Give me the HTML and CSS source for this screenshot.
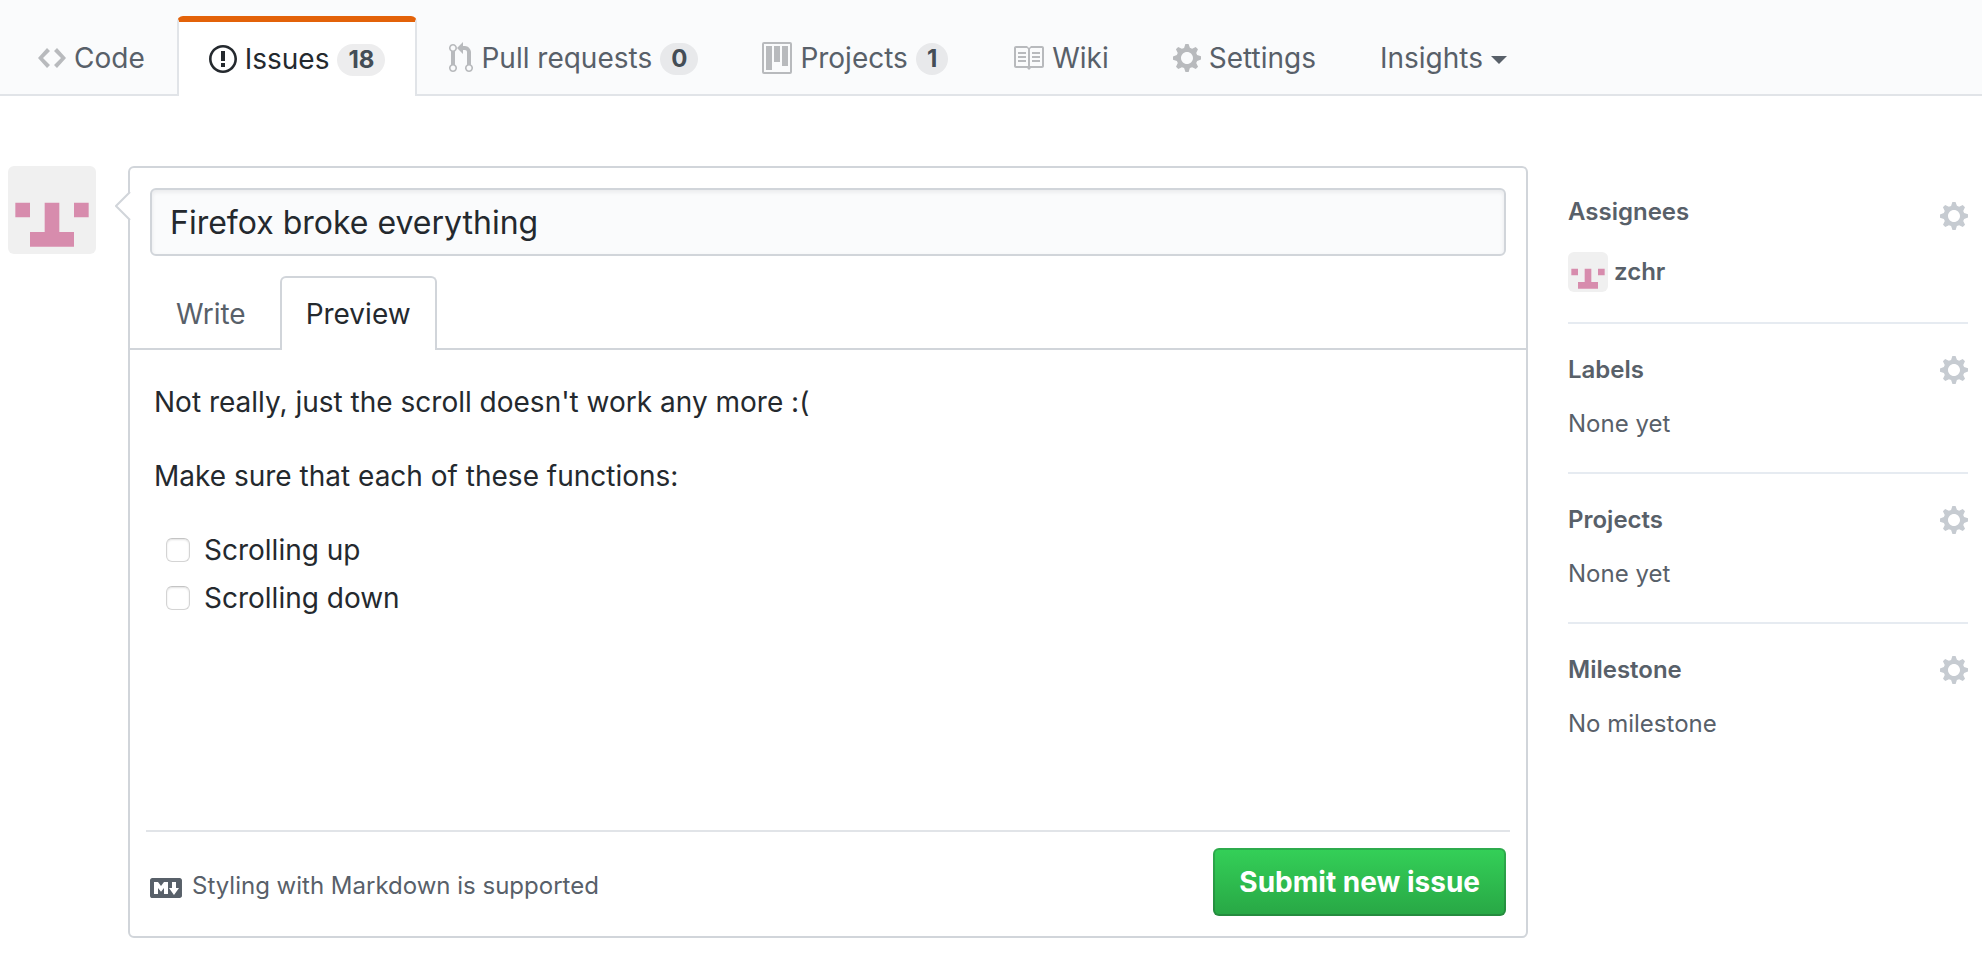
FILE: index.html
```html
<!DOCTYPE html>
<html lang="en">
<head>
<meta charset="utf-8">
<meta name="viewport" content="width=device-width, initial-scale=1">
<title>New issue</title>
<link rel="stylesheet" href="styles.css">
</head>
<body>
<svg class="defs" aria-hidden="true">
  <symbol id="gear" viewBox="0 0 14 16"><path fill-rule="evenodd" d="M14 8.77v-1.6l-1.94-.64-.45-1.09.88-1.84-1.13-1.13-1.81.91-1.09-.45-.69-1.92h-1.6l-.63 1.94-1.11.45-1.84-.88-1.13 1.13.91 1.81-.45 1.09L0 7.23v1.59l1.94.64.45 1.09-.88 1.84 1.13 1.13 1.81-.91 1.09.45.69 1.92h1.59l.63-1.94 1.11-.45 1.84.88 1.13-1.13-.92-1.81.47-1.09L14 8.75v.02zM7 11c-1.66 0-3-1.34-3-3s1.34-3 3-3 3 1.34 3 3-1.34 3-3 3z"/></symbol>
  <symbol id="identicon" viewBox="0 0 12 12"><path fill="#f0f0f0" d="M0 0h12v12H0z"/><path fill="#d78cad" d="M1 5h2v2H1zM9 5h2v2H9zM5 5h2v4h2v2H3V9h2z"/></symbol>
</svg>

<nav class="repo-nav" aria-label="Repository">
  <a class="tab" href="#code">
    <svg class="icon" width="28" height="32" viewBox="0 0 14 16" aria-hidden="true"><path fill-rule="evenodd" d="M9.5 3L8 4.5 11.5 8 8 11.5 9.5 13 14 8 9.5 3zm-5 0L0 8l4.5 5L6 11.5 2.5 8 6 4.5 4.5 3z"/></svg>
    <span>Code</span>
  </a>
  <a class="tab tab-selected" href="#issues" aria-current="page">
    <svg class="icon" width="28" height="32" viewBox="0 0 14 16" aria-hidden="true"><path fill-rule="evenodd" d="M7 2.3c3.14 0 5.7 2.56 5.7 5.7s-2.56 5.7-5.7 5.7A5.71 5.71 0 0 1 1.3 8c0-3.14 2.56-5.7 5.7-5.7zM7 1C3.14 1 0 4.14 0 8s3.14 7 7 7 7-3.14 7-7-3.14-7-7-7zm1 3H6v5h2V4zm0 6H6v2h2v-2z"/></svg>
    <span>Issues</span>
    <span class="counter">18</span>
  </a>
  <a class="tab" href="#pulls">
    <svg class="icon" width="24" height="32" viewBox="0 0 12 16" aria-hidden="true"><path fill-rule="evenodd" d="M11 11.28V5c-.03-.78-.34-1.47-.94-2.06C9.46 2.35 8.78 2.03 8 2H7V0L4 3l3 3V4h1c.27.02.48.11.69.31.21.2.3.42.31.69v6.28A1.993 1.993 0 0 0 10 15a1.993 1.993 0 0 0 1-3.72zm-1 2.92c-.66 0-1.2-.55-1.2-1.2 0-.65.55-1.2 1.2-1.2.65 0 1.2.55 1.2 1.2 0 .65-.55 1.2-1.2 1.2zM4 3c0-1.11-.89-2-2-2a1.993 1.993 0 0 0-1 3.72v6.56A1.993 1.993 0 0 0 2 15a1.993 1.993 0 0 0 1-3.72V4.72c.59-.34 1-.98 1-1.72zm-.8 10c0 .66-.55 1.2-1.2 1.2-.65 0-1.2-.55-1.2-1.2 0-.65.55-1.2 1.2-1.2.65 0 1.2.55 1.2 1.2zM2 4.2C1.34 4.2.8 3.65.8 3c0-.65.55-1.2 1.2-1.2.65 0 1.2.55 1.2 1.2 0 .65-.55 1.2-1.2 1.2z"/></svg>
    <span>Pull requests</span>
    <span class="counter">0</span>
  </a>
  <a class="tab" href="#projects">
    <svg class="icon" width="30" height="32" viewBox="0 0 15 16" aria-hidden="true"><path fill-rule="evenodd" d="M10 12h3V2h-3v10zm-4-2h3V2H6v8zm-4 4h3V2H2v12zm-1 1h13V1H1v14zM14 0H1a1 1 0 0 0-1 1v14a1 1 0 0 0 1 1h13a1 1 0 0 0 1-1V1a1 1 0 0 0-1-1z"/></svg>
    <span>Projects</span>
    <span class="counter">1</span>
  </a>
  <a class="tab" href="#wiki">
    <svg class="icon" width="32" height="32" viewBox="0 0 16 16" aria-hidden="true"><path fill-rule="evenodd" d="M3 5h4v1H3V5zm0 3h4V7H3v1zm0 2h4V9H3v1zm11-5h-4v1h4V5zm0 2h-4v1h4V7zm0 2h-4v1h4V9zm2-6v9c0 .55-.45 1-1 1H9.5l-1 1-1-1H2c-.55 0-1-.45-1-1V3c0-.55.45-1 1-1h5.5l1 1 1-1H15c.55 0 1 .45 1 1zm-8 .5L7.5 3H2v9h6V3.5zm7-.5H9.5l-.5.5V12h6V3z"/></svg>
    <span>Wiki</span>
  </a>
  <a class="tab" href="#settings">
    <svg class="icon" width="28" height="32" aria-hidden="true"><use href="#gear"/></svg>
    <span>Settings</span>
  </a>
  <button class="tab" type="button" aria-haspopup="true">
    <span>Insights</span>
    <span class="caret"></span>
  </button>
</nav>

<main class="page">
  <svg class="avatar" width="88" height="88" role="img" aria-label="zchr"><use href="#identicon"/></svg>

  <form class="issue-box">
    <svg class="pointer" width="16" height="32" viewBox="0 0 16 32" aria-hidden="true"><path class="pointer-fill" d="M16 1L1 16l15 15z"/><path class="pointer-line" d="M15 2L1 16l14 14"/></svg>
    <div class="title-row">
      <input class="title-input" type="text" aria-label="Title" value="Firefox broke everything">
    </div>
    <div class="editor-tabs" role="tablist">
      <button class="editor-tab" type="button" role="tab" aria-selected="false">Write</button>
      <button class="editor-tab editor-tab-selected" type="button" role="tab" aria-selected="true">Preview</button>
    </div>
    <div class="preview">
      <p>Not really, just the scroll doesn't work any more :(</p>
      <p>Make sure that each of these functions:</p>
      <ul class="tasks">
        <li><label class="task"><input class="check" type="checkbox">Scrolling up</label></li>
        <li><label class="task"><input class="check" type="checkbox">Scrolling down</label></li>
      </ul>
    </div>
    <div class="form-footer">
      <a class="markdown-link" href="#markdown">
        <svg class="markdown-icon" width="32" height="32" viewBox="0 0 16 16" aria-hidden="true"><path fill-rule="evenodd" d="M14.85 3H1.15C.52 3 0 3.52 0 4.15v7.69C0 12.48.52 13 1.15 13h13.69c.64 0 1.15-.52 1.15-1.15v-7.7C16 3.52 15.48 3 14.85 3zM9 11H7V8L5.5 9.92 4 8v3H2V5h2l1.5 2L7 5h2v6zm2.99.5L9.5 8H11V5h2v3h1.5l-2.51 3.5z"/></svg>
        <span>Styling with Markdown is supported</span>
      </a>
      <button class="submit" type="submit">Submit new issue</button>
    </div>
  </form>

  <aside class="sidebar">
    <section class="side-section">
      <div class="side-head side-head-first">
        <h2>Assignees</h2>
        <button class="gear-button" type="button" aria-label="Edit assignees"><svg width="28" height="32" aria-hidden="true"><use href="#gear"/></svg></button>
      </div>
      <a class="assignee" href="#zchr">
        <svg class="avatar" width="40" height="40" aria-hidden="true"><use href="#identicon"/></svg>
        <span>zchr</span>
      </a>
    </section>
    <section class="side-section">
      <div class="side-head">
        <h2>Labels</h2>
        <button class="gear-button" type="button" aria-label="Edit labels"><svg width="28" height="32" aria-hidden="true"><use href="#gear"/></svg></button>
      </div>
      <p>None yet</p>
    </section>
    <section class="side-section">
      <div class="side-head">
        <h2>Projects</h2>
        <button class="gear-button" type="button" aria-label="Edit projects"><svg width="28" height="32" aria-hidden="true"><use href="#gear"/></svg></button>
      </div>
      <p>None yet</p>
    </section>
    <section class="side-section">
      <div class="side-head">
        <h2>Milestone</h2>
        <button class="gear-button" type="button" aria-label="Edit milestone"><svg width="28" height="32" aria-hidden="true"><use href="#gear"/></svg></button>
      </div>
      <p>No milestone</p>
    </section>
  </aside>
</main>
</body>
</html>
```
FILE: styles.css
```css
* {
  box-sizing: border-box;
}

body {
  margin: 0;
  background: #fff;
  color: #24292e;
  font-family: Inter, "Liberation Sans", sans-serif;
  font-size: 28px;
  line-height: 42px;
}

button,
input {
  font: inherit;
  color: inherit;
}

button {
  cursor: pointer;
}

a {
  color: inherit;
  text-decoration: none;
}

h2,
p,
ul {
  margin: 0;
  padding: 0;
}

.defs {
  position: absolute;
  width: 0;
  height: 0;
}

/* Repository navigation */

.repo-nav {
  display: flex;
  padding: 16px 6px 0;
  background: #fafbfc;
  box-shadow: inset 0 -2px #e1e4e8;
}

.tab {
  display: flex;
  align-items: center;
  gap: 8px;
  height: 80px;
  padding: 2px 30px 0;
  border: 2px solid transparent;
  border-bottom: 0;
  border-radius: 6px 6px 0 0;
  background: none;
  color: #586069;
  white-space: nowrap;
}

.icon {
  flex: none;
  fill: #b8babd;
}

.tab-selected {
  padding-top: 0;
  border-color: #e1e4e8;
  border-top: 6px solid #e36209;
  background: #fff;
  color: #24292e;
}

.tab-selected .icon {
  fill: #24292e;
}

.counter {
  margin-top: 2px;
  padding: 4px 11px;
  border-radius: 40px;
  background: rgba(27, 31, 35, 0.08);
  color: #444d56;
  font-size: 24px;
  font-weight: 700;
  line-height: 24px;
}

.caret {
  margin-top: 4px;
  border: 8px solid transparent;
  border-top-color: currentColor;
  border-bottom: 0;
}

/* Page columns */

.page {
  display: flex;
  align-items: flex-start;
  padding: 70px 14px 42px 8px;
}

.avatar {
  flex: none;
  border-radius: 6px;
}

/* Issue form */

.issue-box {
  position: relative;
  flex: 1;
  min-width: 0;
  margin: 0 40px 0 32px;
  border: 2px solid #d1d5da;
  border-radius: 6px;
}

.pointer {
  position: absolute;
  top: 22px;
  left: -15px;
}

.pointer-fill {
  fill: #fff;
}

.pointer-line {
  fill: none;
  stroke: #d1d5da;
  stroke-width: 2;
}

.title-row {
  padding: 20px;
}

.title-input {
  display: block;
  width: 100%;
  height: 68px;
  padding: 0 18px;
  border: 2px solid #d1d5da;
  border-radius: 6px;
  background: #fafbfc;
  box-shadow: inset 0 2px 4px rgba(27, 31, 35, 0.08);
  font-size: 32px;
}

.editor-tabs {
  display: flex;
  gap: 8px;
  padding: 0 20px;
  box-shadow: inset 0 -2px #d1d5da;
}

.editor-tab {
  height: 74px;
  padding: 0 24px;
  border: 2px solid transparent;
  border-bottom: 0;
  border-radius: 6px 6px 0 0;
  background: none;
  color: #586069;
}

.editor-tab-selected {
  border-color: #d1d5da;
  background: #fff;
  color: #24292e;
}

.preview {
  display: flex;
  flex-direction: column;
  gap: 32px;
  min-height: 482px;
  margin: 0 16px;
  padding: 31px 8px;
  border-bottom: 2px solid #e1e4e8;
}

.tasks {
  display: grid;
  gap: 6px;
  padding-left: 12px;
  list-style: none;
}

.task {
  display: flex;
  align-items: center;
  gap: 14px;
}

.check {
  appearance: none;
  width: 24px;
  height: 24px;
  margin: 0;
  border: 1px solid #d4d4d4;
  border-top-color: #c4c4c4;
  border-radius: 6px;
  background: #fff;
  box-shadow: inset 0 1px 2px rgba(0, 0, 0, 0.12);
}

.form-footer {
  display: flex;
  align-items: center;
  justify-content: space-between;
  padding: 16px 20px 20px;
}

.markdown-link {
  display: flex;
  align-items: center;
  gap: 10px;
  padding-top: 8px;
  color: #586069;
  font-size: 24px;
  line-height: 36px;
}

.markdown-icon {
  margin-top: 4px;
  fill: currentColor;
}

.submit {
  height: 68px;
  padding: 0 24px;
  border: 2px solid rgba(27, 31, 35, 0.2);
  border-radius: 6px;
  background: linear-gradient(#34d058, #28a745) border-box;
  color: #fff;
  font-weight: 700;
}

/* Sidebar */

.sidebar {
  flex: none;
  width: 400px;
  color: #586069;
  font-size: 24px;
  line-height: 36px;
}

.side-section {
  padding: 28px 0 30px;
}

.side-section + .side-section {
  border-top: 2px solid #e6ebf1;
}

.side-head {
  display: flex;
  align-items: center;
  justify-content: space-between;
  margin-bottom: 18px;
}

.side-head h2 {
  font-size: 24px;
  font-weight: 600;
  line-height: 36px;
}

.side-head-first {
  align-items: flex-start;
  margin-bottom: 20px;
}

.side-head-first .gear-button {
  padding-top: 6px;
}

.gear-button {
  display: flex;
  padding: 0;
  border: 0;
  background: none;
}

.gear-button svg {
  fill: #c6cbd1;
}

.assignee {
  display: flex;
  align-items: center;
  gap: 6px;
  font-weight: 600;
}
```
